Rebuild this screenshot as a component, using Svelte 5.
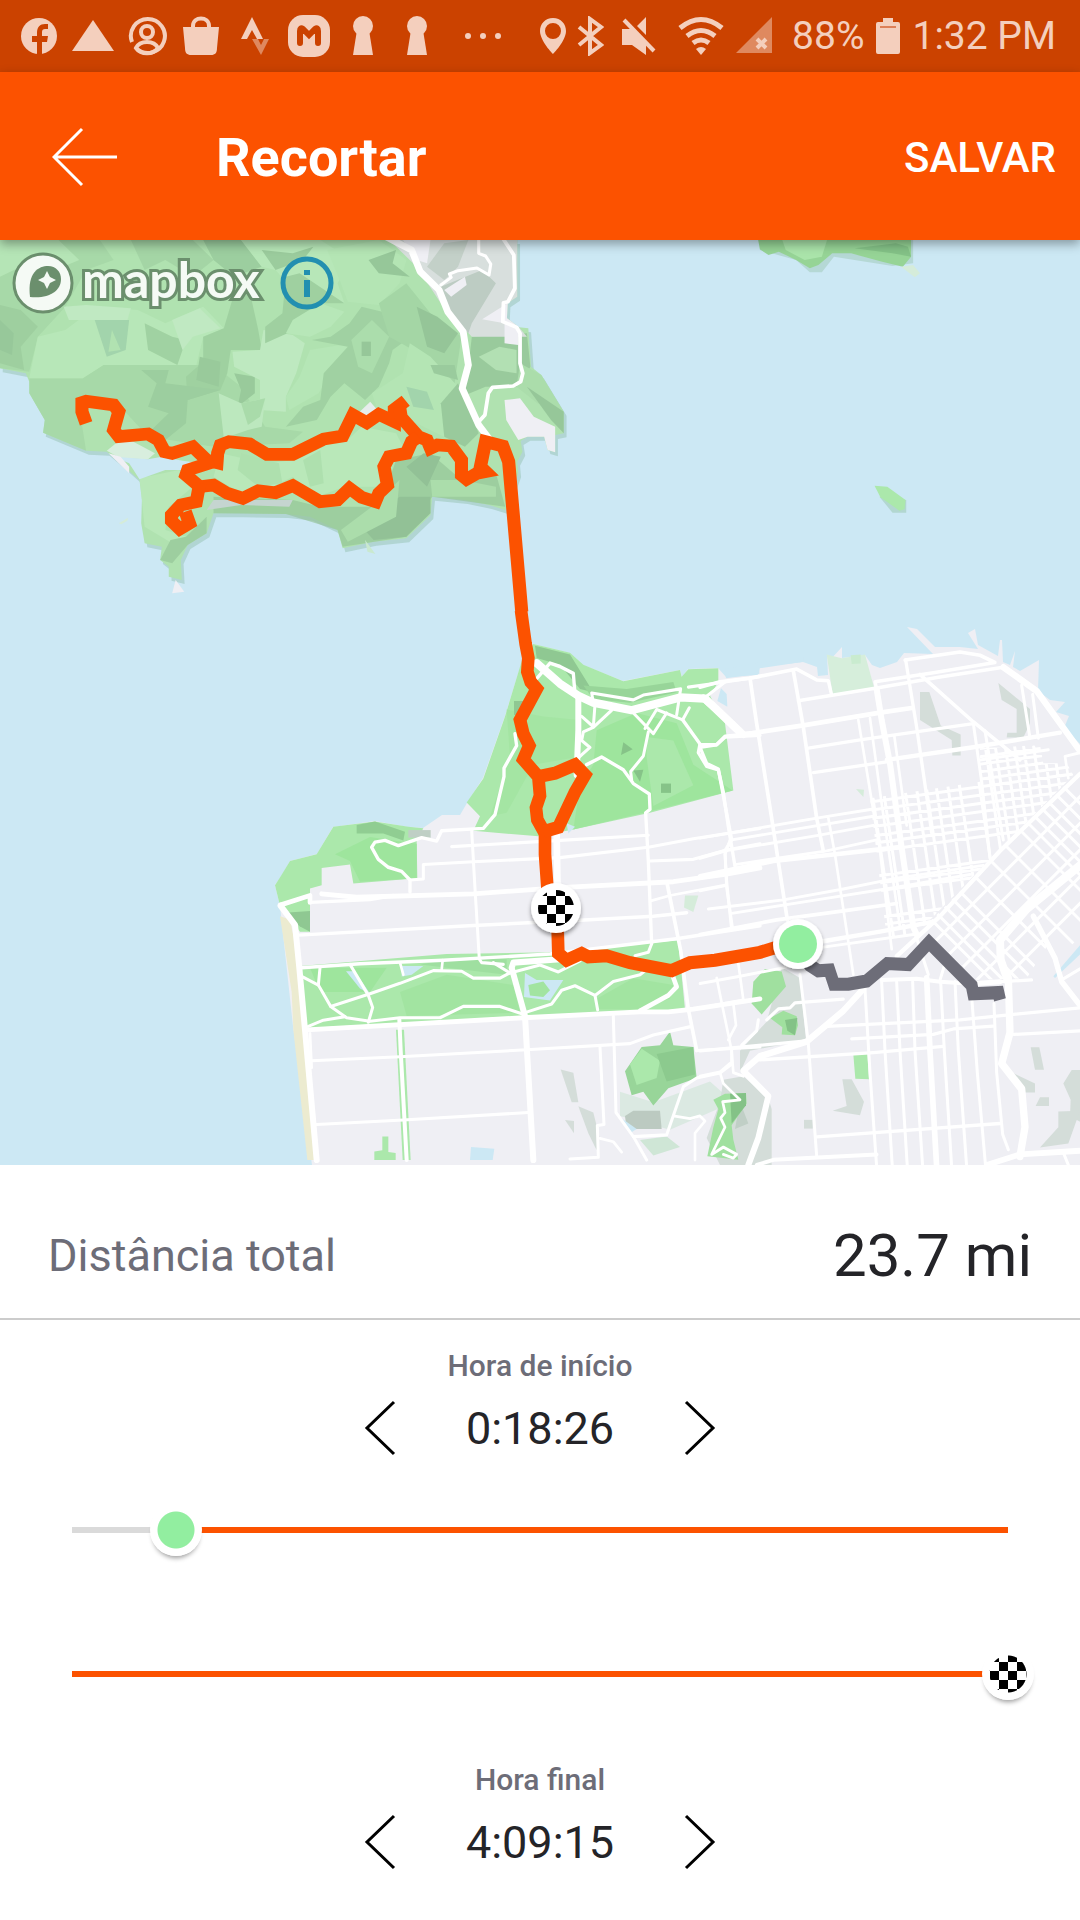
<script lang="ts">
	type Shape = { fill: string; points: string };
	type Road = { w: number; points: string };

	let start = $state(100);
	let end = $state(900);
	const steps = 900;

	// Each map sheet is digitised in its own units and placed by its matrix.
	const sheets = {
		north: 'matrix(.34439 0 0 .33333 0 0)',
		bay: 'matrix(.34439 0 0 .33333 400 0)',
		west: 'matrix(.33333 0 0 .34439 260 380)',
		east: 'matrix(.33333 0 0 .36354 700 360)',
		downtown: 'matrix(.33333 0 0 .33333 860 440)'
	};

	const headlands =
		'0,0 1502,0 1502,170 1474,190 1472,235 1507,262 1534,265 1542,380 1572,405 1637,515 1637,580 1612,585 1612,637 1590,630 1580,590 1532,590 1512,603 1517,635 1502,665 1505,700 1467,810 1420,795 1350,780 1255,770 1250,825 1180,895 1085,905 995,925 980,870 900,830 830,822 700,820 620,820 600,880 545,915 525,960 528,1020 490,1010 490,980 465,960 470,920 420,910 410,850 412,780 405,720 350,670 310,635 250,632 125,578 130,540 85,460 85,425 75,400 0,385';

	const hills: Shape[] = [
		{ fill: '#a2d4a3', points: '0,0 290,0 330,60 250,90 190,200 110,290 85,395 0,385' },
		{ fill: '#b9e8ba', points: '0,0 170,0 230,60 160,90 60,80 0,110' },
		{ fill: '#93c395', points: '0,195 60,210 110,260 60,320 70,390 0,370' },
		{ fill: '#88b88d', points: '0,240 40,280 35,345 0,330' },
		{ fill: '#95c898', points: '40,110 130,90 190,150 120,180' },
		{ fill: '#a2d4a3', points: '85,415 240,415 300,375 620,375 700,440 770,560 880,575 840,610 620,620 430,590 350,500 230,500 250,632 125,578 130,540 85,460' },
		{ fill: '#bdebbe', points: '110,290 190,270 280,200 400,210 480,250 590,200 650,265 590,290 570,375 300,375 240,415 85,415' },
		{ fill: '#cbeece', points: '185,200 250,195 380,205 370,240 280,240 200,240' },
		{ fill: '#9accaa', points: '275,240 375,240 365,330 310,350' },
		{ fill: '#b3e3b3', points: '325,270 350,330 315,335' },
		{ fill: '#97c999', points: '420,250 500,290 540,300 515,375 430,330' },
		{ fill: '#cbeece', points: '500,240 580,205 640,265 560,290 530,330' },
		{ fill: '#9dce9f', points: '380,0 560,0 620,60 560,110 480,60 420,90' },
		{ fill: '#90c194', points: '590,0 700,0 760,80 680,110 620,60' },
		{ fill: '#bdebbe', points: '700,0 930,0 1020,60 980,130 1000,190 870,170 800,90 760,80' },
		{ fill: '#8ebf92', points: '760,30 850,40 910,20 880,60 800,90' },
		{ fill: '#95c697', points: '590,290 650,265 680,160 720,130 735,200 750,270 760,330 670,330 660,400 640,450 545,480 540,410 590,365' },
		{ fill: '#8abb8e', points: '580,350 640,365 635,440 570,420' },
		{ fill: '#90c194', points: '410,390 490,390 480,430 640,450 545,480 540,550 480,600 430,580 490,520 430,500 455,430' },
		{ fill: '#8abb8e', points: '680,400 740,410 740,460 690,500 700,450' },
		{ fill: '#c8eecb', points: '765,270 850,285 885,310 860,400 830,470 830,515 755,510 755,420 680,380 675,335 755,330' },
		{ fill: '#b9e9ba', points: '900,330 1020,310 960,400 925,460 840,510 830,470 870,410' },
		{ fill: '#c5ecc8', points: '635,460 700,490 770,475 760,560 720,570 650,595' },
		{ fill: '#a6d8a7', points: '700,490 770,475 755,530 720,555' },
		{ fill: '#94c597', points: '830,110 870,100 1000,190 930,190 920,240 770,310 770,260 820,220' },
		{ fill: '#bdebbe', points: '850,240 930,190 1000,215 960,260 900,290 830,280' },
		{ fill: '#96c799', points: '905,300 960,290 1015,250 1050,200 1170,230 1180,300 1140,330 1130,370 1100,440 1060,480 1000,430 960,470 920,540 830,560 880,500 930,480 940,400 1010,320' },
		{ fill: '#a9daaa', points: '1020,300 1080,240 1130,290 1080,400 1040,380' },
		{ fill: '#86b68b', points: '1050,305 1077,305 1077,348 1050,348' },
		{ fill: '#b7e8b8', points: '950,30 1100,0 1180,60 1160,130 1100,195 1010,185 990,130' },
		{ fill: '#86b68b', points: '1070,60 1150,30 1140,70 1190,110 1100,100' },
		{ fill: '#9dcf9f', points: '1100,190 1180,130 1250,220 1340,290 1320,430 1200,330 1130,290' },
		{ fill: '#84b389', points: '1210,200 1270,230 1330,280 1290,340 1240,320' },
		{ fill: '#b7e8b8', points: '1190,310 1250,350 1330,440 1380,560 1290,590 1190,540 1100,520 1080,460 1170,400' },
		{ fill: '#8dbd91', points: '1250,375 1320,375 1330,420 1260,400' },
		{ fill: '#9accaa', points: '1180,440 1240,455 1260,510 1200,500' },
		{ fill: '#8bbb8f', points: '1330,430 1390,580 1350,620 1290,590 1280,490' },
		{ fill: '#8bbb8f', points: '1370,290 1530,280 1540,380 1510,440 1410,440 1340,470 1360,380' },
		{ fill: '#b4dfb5', points: '1390,350 1450,320 1500,330 1500,400 1440,390' },
		{ fill: '#a8daa9', points: '1510,370 1572,405 1637,515 1560,490 1500,440' },
		{ fill: '#86b68b', points: '1530,440 1637,515 1637,580 1600,540' },
		{ fill: '#bfedc0', points: '640,640 770,670 860,660 960,610 1010,600 1050,560 1150,580 1180,640 1110,680 1110,740 1040,740 1000,740 920,770 850,710 790,740 700,760 620,710' },
		{ fill: '#addfae', points: '700,640 810,670 820,730 750,740 690,690' },
		{ fill: '#addfae', points: '880,660 930,630 940,730 900,740' },
		{ fill: '#92c295', points: '620,770 850,780 930,800 1090,800 1130,720 1150,660 1250,640 1340,720 1440,700 1467,800 1255,770 1180,890 995,920 980,870 830,822 620,820' },
		{ fill: '#7fac86', points: '1050,860 1160,770 1250,770 1250,820 1180,890 1085,900' },
		{ fill: '#a9dba9', points: '1080,800 1160,720 1150,830 1010,905 990,870' },
		{ fill: '#7fac86', points: '1180,680 1230,640 1280,650 1240,740' },
		{ fill: '#a8daa9', points: '1250,720 1340,720 1440,740 1440,770 1255,770' },
		{ fill: '#bfedc0', points: '405,715 520,690 560,740 490,800 480,870 540,890 500,910 420,860 412,780' },
		{ fill: '#92c295', points: '540,890 600,830 600,880 545,915 500,970 465,960 495,900' }
	];

	const northShapes: Shape[] = [
		{ fill: '#c5d5d0', points: '620,780 850,780 840,800 700,795 600,810' },
		{ fill: '#d8eede', points: '310,632 360,590 450,640 430,658 350,655' },
		{ fill: '#cce8f4', points: '330,650 430,658 470,650 530,662 575,668 525,690 480,690 405,718 375,670' },
		{ fill: '#efeff4', points: '315,640 350,650 375,680 375,700 345,670' },
		{ fill: '#efeff4', points: '510,1020 535,1055 500,1060' },
		{ fill: '#d5ecd9', points: '345,850 372,833 370,842 352,853' },
		{ fill: '#c9e9cf', points: '1060,900 1090,942 1067,935' },
		{ fill: '#e6edec', points: '1040,520 1075,485 1100,515 1065,545' },
		{ fill: '#d8dfdd', points: '1130,0 1502,0 1502,170 1474,190 1472,235 1507,262 1530,290 1370,290 1280,190 1210,80' },
		{ fill: '#bdccc3', points: '1280,140 1400,90 1440,130 1370,250 1360,280 1300,220' },
		{ fill: '#c3d0c8', points: '1290,10 1360,0 1330,80 1290,120 1240,80' },
		{ fill: '#efeff4', points: '1170,0 1250,0 1240,70 1210,60' },
		{ fill: '#efeff4', points: '1290,150 1350,110 1355,135 1310,170' },
		{ fill: '#efeff4', points: '1400,238 1474,190 1472,235 1507,262 1505,315 1465,310 1465,250' },
		{ fill: '#efeff4', points: '1465,480 1510,475 1550,530 1612,560 1612,637 1590,630 1580,590 1532,590 1505,600 1470,540' }
	];

	const bayShapes: Shape[] = [
		{ fill: '#b5d8d5', points: '1045,30 1150,60 1190,97 1225,97 1260,50 1430,78 1490,70 1490,0 1045,0' },
		{ fill: '#96d496', points: '1040,0 1484,0 1484,50 1460,80 1400,65 1310,40 1255,40 1215,75 1190,85 1150,60 1100,35 1070,45 1045,28' },
		{ fill: '#aae4aa', points: '1110,0 1240,0 1225,50 1175,60 1120,30' },
		{ fill: '#84c287', points: '1320,25 1440,10 1475,20 1484,50 1430,40' },
		{ fill: '#d5ecda', points: '1455,80 1490,75 1510,100 1495,112' },
		{ fill: '#b2d7d0', points: '1392,770 1430,818 1470,818 1470,780' },
		{ fill: '#abe8ab', points: '1378,737 1415,740 1468,780 1465,808 1450,812 1395,772' }
	];

	const peninsula =
		'533,404 570,413 583,425 623,441 680,430 682,437 688,429 718,428 726,437 758,435 760,427 803,422 817,427 818,436 828,435 827,415 830,420 842,407 842,418 865,415 872,425 880,428 897,422 904,413 933,414 907,387 917,389 935,407 960,407 978,409 968,393 975,389 978,405 998,416 1000,400 1002,400 1003,422 1010,425 1015,411 1013,427 1020,431 1039,420 1038,451 1050,460 1065,462 1056,472 1069,476 1064,488 1080,504 1080,925 312,925 293,786 280,666 275,645 282,635 290,621 317,614 333,587 375,581 408,587 423,588 442,575 460,575 467,563 483,538 505,476 522,421';

	const westShapes: Shape[] = [
		{ fill: '#ecebd0', points: '60,860 90,870 118,1000 170,1568 142,1568 100,1190 95,1080' },
		{ fill: '#abe8ab', points: '785,120 820,70 930,95 970,130 1090,178 1260,145 1265,165 1285,143 1375,140 1375,180 1350,220 1395,300 1420,495 1170,560 940,608 835,628 640,612 660,570 620,530 670,460 735,280' },
		{ fill: '#9ee59d', points: '1010,320 1130,270 1250,300 1300,420 1418,495 1170,555 940,608 960,480 1000,420' },
		{ fill: '#a4e5a3', points: '740,260 850,280 950,290 940,400 820,420 740,560 690,570 750,400' },
		{ fill: '#abe8ab', points: '1160,340 1240,350 1300,480 1180,540 1160,400' },
		{ fill: '#8fc892', points: '825,75 930,100 1000,210 960,200 900,130 830,110' },
		{ fill: '#98d599', points: '970,190 1100,200 1240,180 1250,210 1110,240 1000,230' },
		{ fill: '#86c388', points: '1090,355 1118,375 1083,392' },
		{ fill: '#86c388', points: '1120,437 1150,435 1140,470' },
		{ fill: '#86c388', points: '1203,475 1233,475 1233,502 1203,502' },
		{ fill: '#8fc892', points: '762,235 790,235 785,280 762,275' },
		{ fill: '#cfe8f2', points: '920,590 945,600 925,620' },
		{ fill: '#abe8ab', points: '45,770 65,740 90,700 170,680 220,600 345,585 445,600 490,605 470,640 472,750 280,765 270,710 185,720 185,770 150,780 150,905 120,905 60,830' },
		{ fill: '#9ee59d', points: '225,680 330,630 400,640 470,650 470,750 300,760 270,700' },
		{ fill: '#90cd92', points: '290,595 345,585 435,615 430,640 370,620 290,620' },
		{ fill: '#bfcfc5', points: '445,610 512,610 512,632 445,632' },
		{ fill: '#8fc892', points: '75,850 150,845 150,905 120,890' },
		{ fill: '#d5ecda', points: '1275,800 1315,800 1300,848 1272,835' },
		{ fill: '#abe8ab', points: '120,1005 560,970 870,965 1255,930 1275,1130 800,1150 140,1185' },
		{ fill: '#9ee59d', points: '150,1010 380,1010 330,1080 180,1080' },
		{ fill: '#a2e4a1', points: '420,1080 560,1030 760,1060 780,1140 440,1150' },
		{ fill: '#a2e4a1', points: '1010,1100 1120,1040 1240,1060 1230,1100 1130,1130 1010,1130' },
		{ fill: '#9fdfa0', points: '480,1000 600,980 740,985 740,1030 560,1010' },
		{ fill: '#cce8f4', points: '258,1020 285,1020 330,1085 300,1070' },
		{ fill: '#cce8f4', points: '425,1005 490,1005 455,1030 425,1035' },
		{ fill: '#cce8f4', points: '795,1025 830,1045 910,1045 870,1105 792,1095' },
		{ fill: '#a2e4a1', points: '805,1060 850,1050 870,1075 850,1095 810,1090' },
		{ fill: '#cce8f4', points: '1383,198 1400,215 1402,252 1372,235' },
		{ fill: '#abe8ab', points: '408,1190 432,1190 452,1568 428,1568' },
		{ fill: '#abe8ab', points: '367,1500 385,1500 385,1545 407,1548 407,1568 343,1568 343,1543 367,1540' },
		{ fill: '#cce8f4', points: '633,1530 703,1535 698,1568 630,1568' },
		{ fill: '#d4ddd9', points: '902,1305 940,1315 955,1400 935,1400' },
		{ fill: '#d4ddd9', points: '955,1412 1000,1430 1018,1500 1010,1540 985,1490' },
		{ fill: '#d4ddd9', points: '915,1452 942,1455 942,1490' },
		{ fill: '#dbe9e2', points: '1080,1370 1180,1400 1350,1340 1420,1400 1230,1480 1080,1440' },
		{ fill: '#bccac1', points: '1120,1425 1200,1425 1205,1478 1100,1478 1095,1440' },
		{ fill: '#cce8f4', points: '1075,1440 1130,1478 1110,1490' },
		{ fill: '#98d599', points: '1095,1310 1145,1240 1200,1235 1230,1195 1240,1235 1300,1240 1310,1330 1225,1360 1180,1410 1150,1370 1115,1380' },
		{ fill: '#abe8ab', points: '1110,1290 1145,1245 1200,1280 1190,1330 1130,1350' },
		{ fill: '#8cca8e', points: '1190,1260 1300,1240 1305,1320 1220,1340' },
		{ fill: '#cfe6d6', points: '1140,1510 1220,1500 1260,1530 1180,1555' }
	];

	const eastShapes: Shape[] = [
		{ fill: '#d6eedb', points: '380,150 425,160 495,150 522,240 398,260' },
		{ fill: '#c9ebcf', points: '452,152 482,150 482,175 455,176' },
		{ fill: '#cce8f4', points: '75,190 180,172 310,158 310,170 178,188 178,203 78,215' },
		{ fill: '#d4ddd9', points: '660,253 688,253 722,345 782,370 782,428 757,428 755,385 660,330' },
		{ fill: '#d4ddd9', points: '895,228 990,300 990,340 970,378 920,378 922,365 950,365 950,300 905,275' },
		{ fill: '#d5ecda', points: '468,520 492,522 490,542' },
		{ fill: '#d4ddd9', points: '245,1010 300,1040 318,1210 150,1240 120,1300 120,1240 200,1160' },
		{ fill: '#a0e09f', points: '160,1050 195,1015 245,1022 258,1063 185,1140 155,1110' },
		{ fill: '#a0e09f', points: '210,1150 250,1130 290,1145 294,1170 285,1197 245,1195 247,1175' },
		{ fill: '#84c287', points: '255,1155 292,1150 285,1197 262,1185' },
		{ fill: '#d4ddd9', points: '70,1320 130,1310 205,1370 215,1400 215,1554 60,1554 20,1480 60,1380' },
		{ fill: '#c0cfc6', points: '120,1380 145,1440 105,1455' },
		{ fill: '#a0e09f', points: '40,1375 75,1358 138,1356 140,1385 95,1445 100,1485 115,1540 22,1530 40,1450 55,1400' },
		{ fill: '#84c287', points: '90,1358 138,1356 138,1390 95,1440' },
		{ fill: '#abe8ab', points: '460,1250 502,1248 507,1318 466,1317' },
		{ fill: '#d4ddd9', points: '427,1318 455,1318 492,1380 480,1417 398,1405 440,1392' },
		{ fill: '#d4ddd9', points: '312,1430 338,1430 338,1454 312,1454' },
		{ fill: '#d4ddd9', points: '992,1230 1018,1230 1032,1292 1005,1292' },
		{ fill: '#d4ddd9', points: '925,1295 1005,1330 1005,1355 970,1355' },
		{ fill: '#d4ddd9', points: '1020,1368 1047,1368 1047,1392 1007,1392' },
		{ fill: '#d4ddd9', points: '1090,1330 1115,1293 1140,1293 1140,1435 1110,1420 1112,1375' },
		{ fill: '#d4ddd9', points: '1075,1407 1140,1405 1105,1495 1020,1506 1075,1450' },
		{ fill: '#cce8f4', points: '1060,1035 1140,950 1140,975 1065,1040' }
	];

	const northRoads: Road[] = [
		{ w: 20, points: '1120,-10 1195,30 1220,95 1275,150 1300,215 1345,275 1360,375 1342,445 1390,555 1430,610' },
		{ w: 11, points: '1460,-5 1492,45 1495,145 1475,185 1462,188 1460,245 1500,262 1510,280 1510,370 1518,400 1512,425 1490,438 1430,442 1418,460 1408,525 1390,545' },
		{ w: 9, points: '1390,0 1390,40 1410,48 1425,72 1420,105 1385,84 1330,92 1305,102 1310,112 1280,135' }
	];

	const westRoads: Road[] = [
		{ w: 24, points: '830,125 900,185 955,220 1000,240 1115,262 1260,225 1335,228 1440,325' },
		{ w: 18, points: '955,220 955,320 950,450' },
		{ w: 20, points: '890,620 893,800' },
		{ w: 10, points: '830,170 870,125 900,135 940,155 945,215' },
		{ w: 9, points: '1000,240 995,212 1120,232 1150,218 1262,200 1250,275' },
		{ w: 9, points: '1285,195 1395,180 1500,165' },
		{ w: 9, points: '1335,225 1395,180' },
		{ w: 10, points: '1440,330 1500,325' },
		{ w: 9, points: '1005,245 1000,310 965,280' },
		{ w: 9, points: '1055,262 1000,312 970,325 965,350 990,370 955,400' },
		{ w: 9, points: '1115,265 1180,330 1220,270' },
		{ w: 9, points: '1155,315 1190,260 1268,290 1288,255' },
		{ w: 10, points: '1268,290 1320,360 1315,385 1340,425 1375,435 1390,500 1405,600 1425,715' },
		{ w: 10, points: '1320,362 1370,362 1395,340 1500,335' },
		{ w: 10, points: '980,420 1025,398 1090,435 1120,475 1168,505 1170,550 1157,560 1165,700 1175,940' },
		{ w: 9, points: '1115,465 1112,440 1150,395 1165,325' },
		{ w: 10, points: '765,330 770,365 732,430 732,455 705,565 670,605 545,612 530,642 485,632 415,655 375,640 345,645 335,660 355,695 385,718 425,730 450,755 450,790' },
		{ w: 9, points: '450,755 490,752 490,710 640,702 900,690 1165,660 1300,635 1500,605' },
		{ w: 9, points: '575,658 900,640 1165,625' },
		{ w: 9, points: '635,610 645,780 658,985 665,995 730,1000' },
		{ w: 14, points: '185,795 290,805 640,795 900,777 1240,760 1400,738 1500,720' },
		{ w: 10, points: '150,820 330,812 400,800' },
		{ w: 14, points: '60,828 150,800 150,820' },
		{ w: 18, points: '62,830 105,885 118,1010 135,1190 170,1568' },
		{ w: 10, points: '115,915 640,887 960,872 1180,860 1280,850' },
		{ w: 10, points: '125,1010 300,998 550,988 870,970 1255,925 1500,888' },
		{ w: 14, points: '140,1190 790,1155 1140,1138 1225,1138 1300,1130 1500,1100' },
		{ w: 18, points: '900,985 760,995 755,1010 795,1150 820,1568' },
		{ w: 9, points: '270,1000 325,1090 338,1125 325,1168' },
		{ w: 9, points: '180,1010 175,1060' },
		{ w: 9, points: '125,1035 175,1060 212,1122 260,1155 330,1165 420,1155 540,1155 610,1122 720,1122 790,1145' },
		{ w: 9, points: '145,1180 190,1162 255,1152' },
		{ w: 9, points: '212,1122 330,1085 420,1055 520,1018 605,1020 640,1040 720,1040 755,1022' },
		{ w: 8, points: '420,995 430,1030' },
		{ w: 8, points: '548,988 545,1015' },
		{ w: 9, points: '700,995 750,1025 840,1002 895,1022 960,990' },
		{ w: 9, points: '795,1140 875,1115 905,1075 945,1062 1005,1090 1060,1050 1140,1030 1160,1015' },
		{ w: 9, points: '1005,1090 1013,1132' },
		{ w: 14, points: '1235,1025 1250,1065 1225,1090 1140,1135' },
		{ w: 9, points: '1175,940 1165,965 1125,975' },
		{ w: 11, points: '1222,768 1262,960 1285,1130 1310,1250' },
		{ w: 9, points: '1310,1250 1500,1240' },
		{ w: 9, points: '1170,700 1300,695 1400,668 1500,650' },
		{ w: 9, points: '1410,640 1395,680 1400,760 1415,900' },
		{ w: 8, points: '1175,815 1230,800 1395,770' },
		{ w: 9, points: '155,1280 420,1268 800,1248 1110,1230 1180,1205 1295,1180' },
		{ w: 9, points: '170,1465 430,1452 805,1430' },
		{ w: 8, points: '150,1200 155,1300' },
		{ w: 12, points: '418,1160 422,1250 440,1568' },
		{ w: 9, points: '1060,1150 1068,1430 1120,1500 1160,1568' },
		{ w: 9, points: '1020,1240 1032,1465 1012,1468 1015,1560 930,1565' },
		{ w: 9, points: '1120,1500 1220,1495 1270,1355 1310,1330 1380,1315 1415,1290 1415,1250' },
		{ w: 8, points: '1020,1505 1060,1515 1085,1545' },
		{ w: 8, points: '1240,1440 1290,1448 1320,1440 1335,1455 1305,1490 1305,1568' }
	];

	const eastRoads: Road[] = [
		{ w: 13, points: '0,760 220,718 400,700 600,680' },
		{ w: 10, points: '0,240 60,225 150,215 290,190 350,220 385,222 395,262' },
		{ w: 20, points: '10,270 60,310 130,370' },
		{ w: 13, points: '130,370 310,345 540,310 635,297' },
		{ w: 10, points: '295,277 530,242 720,212 910,185' },
		{ w: 18, points: '910,185 1010,250 1140,415' },
		{ w: 10, points: '615,165 780,143 840,152 885,172 700,200 525,225 530,245' },
		{ w: 18, points: '530,245 545,330 570,450 600,650 640,900 650,920' },
		{ w: 11, points: '150,215 170,340 215,600 235,720 262,880' },
		{ w: 11, points: '280,195 310,350 350,600 370,690' },
		{ w: 9, points: '320,408 480,385 820,340' },
		{ w: 9, points: '340,475 560,445' },
		{ w: 12, points: '560,440 820,405 1080,365' },
		{ w: 10, points: '617,165 650,350 680,540 695,640' },
		{ w: 10, points: '660,205 820,335 960,440' },
		{ w: 9, points: '965,235 990,380' },
		{ w: 9, points: '998,260 1015,380' },
		{ w: 9, points: '820,340 845,500 870,710' },
		{ w: 9, points: '855,360 880,500 910,660' },
		{ w: 8, points: '475,330 540,690 575,960' },
		{ w: 8, points: '510,325 545,560 600,900' },
		{ w: 8, points: '583,375 620,620' },
		{ w: 8, points: '840,440 1045,412' },
		{ w: 8, points: '1140,420 1095,430 1105,490' },
		{ w: 8, points: '0,655 350,600 520,575' },
		{ w: 8, points: '95,660 520,595' },
		{ w: 8, points: '75,690 350,648 520,620' },
		{ w: 8, points: '105,728 380,690 530,660' },
		{ w: 8, points: '385,600 405,700 460,1030' },
		{ w: 8, points: '0,800 80,785' },
		{ w: 8, points: '25,850 250,825 430,795 590,765 850,730' },
		{ w: 8, points: '95,862 350,825 590,790 810,755' },
		{ w: 10, points: '0,920 230,880 430,855 590,835' },
		{ w: 12, points: '360,940 540,912 700,885' },
		{ w: 8, points: '370,955 640,920' },
		{ w: 10, points: '0,710 75,690 95,660 55,465 20,450 0,405 50,398 75,375 130,370' },
		{ w: 9, points: '75,690 80,790 97,900' },
		{ w: 8, points: '0,1055 120,1035 260,1010' },
		{ w: 8, points: '115,1000 130,1100 0,1122' },
		{ w: 8, points: '50,1040 70,1130 95,1240 100,1300 130,1310' },
		{ w: 8, points: '100,1110 108,1170 85,1210' },
		{ w: 8, points: '0,1310 60,1298 90,1275' },
		{ w: 9, points: '0,1240 320,1213' },
		{ w: 9, points: '430,1098 285,1108 270,1122 235,1125 200,1155' },
		{ w: 9, points: '175,1155 170,1185 125,1225' },
		{ w: 9, points: '300,1030 325,1220 350,1530' },
		{ w: 12, points: '1140,478 900,690 720,870 590,980' },
		{ w: 18, points: '490,1070 430,1130 320,1215 180,1255 130,1295 205,1365 175,1480 145,1554' },
		{ w: 8, points: '60,1300 70,1330 120,1375 68,1380 75,1410 62,1425 75,1450 35,1525 70,1505 110,1525 100,1535 70,1525' },
		{ w: 11, points: '545,1045 650,1042 720,1050 800,1055' },
		{ w: 14, points: '830,1055 900,1050' },
		{ w: 9, points: '900,1050 995,1045' },
		{ w: 9, points: '380,1173 780,1155 940,1140 1140,1122' },
		{ w: 9, points: '455,1207 700,1195 760,1180 880,1172' },
		{ w: 9, points: '180,1265 520,1245 730,1228' },
		{ w: 9, points: '350,1477 900,1440' },
		{ w: 11, points: '170,1554 220,1540 530,1525' },
		{ w: 9, points: '735,1000 720,1045' },
		{ w: 9, points: '650,930 685,1030' },
		{ w: 9, points: '495,1070 510,1300 530,1560' },
		{ w: 9, points: '545,1050 555,1240 577,1560' },
		{ w: 9, points: '590,1050 600,1240 622,1560' },
		{ w: 9, points: '638,1050 645,1240 668,1560' },
		{ w: 17, points: '680,1040 690,1240 710,1560' },
		{ w: 9, points: '722,1050 733,1240 755,1560' },
		{ w: 9, points: '765,1050 775,1240 800,1560' },
		{ w: 9, points: '815,1090 832,1300 857,1560' },
		{ w: 9, points: '882,1110 890,1300 908,1470 925,1512' },
		{ w: 24, points: '1140,730 980,850 900,935 902,990 925,1050' },
		{ w: 22, points: '925,1040 930,1190 905,1275 965,1345 975,1450 960,1530' },
		{ w: 16, points: '860,1554 960,1525 1140,1515' },
		{ w: 9, points: '1090,1520 1105,1554' },
		{ w: 16, points: '1000,870 1065,985 1085,1050 1140,1115' },
		{ w: 9, points: '1085,1045 1140,1015' },
		{ w: 9, points: '942,1195 1140,1185' }
	];

	// Downtown blocks: streets north of Market, diagonals south of it.
	const blockRows = [250, 275, 297, 320, 342, 365, 390, 415, 440, 468, 490, 515, 590, 612, 635, 715, 738];
	const blockCols = [40, 75, 140, 175, 205, 235, 270, 305, 365, 400, 430, 460, 488, 515, 545, 575, 605];
	const somaLong = [1010, 1090, 1170, 1250, 1330];
	const somaCross = [505, 470, 425, 380, 335, 245, 150, 60, -30, -75, -115, -160, -200, -245, -290];

	const blocks = [
		...blockRows.map((y) => `M0 ${y + 5}L690 ${y - 90}`),
		...blockCols.map((x) => `M${x - 24} 200L${x + 62} 780`)
	].join('');
	const soma = [
		...somaLong.map((s) => `M0 ${s}L${s} 0`),
		...somaCross.map((c) => `M0 ${c}L900 ${c + 900}`)
	].join('');

	const northRoute = [
		'250,550 238,515 238,488 250,484 330,495 345,515 330,570 345,590 430,582 460,600 478,635 500,640 560,620 600,660 630,668 632,640 640,615 665,605 725,612 775,643 850,643 940,597 995,588 1025,525 1065,548 1100,523 1145,545 1145,508 1178,482',
		'1160,500 1165,532 1215,590 1240,600 1250,625 1270,615 1310,618 1340,660 1340,705 1355,718 1385,700 1410,695 1395,680 1410,605 1460,618 1477,665 1515,1115',
		'1215,590 1195,605 1180,640 1130,650 1115,680 1125,735 1100,760 1090,785 1050,772 1015,745 980,780 930,785 850,737 800,758 750,752 705,775 660,760 620,735 580,740 540,705 545,690 620,665',
		'580,730 570,785 525,795 498,825 498,843 522,867 550,850 538,815'
	];
	const westRoute = [
		'783,-28 797,70 805,110 802,150 812,180 830,200 780,290 790,330 808,365 790,405 835,455 840,510 828,545 832,580 855,620 855,680 862,775 888,838 893,900 895,968 920,988 965,968 985,978 1040,975 1110,995 1235,1018 1290,995 1365,988 1500,965 1600,935',
		'835,455 885,445 945,420 975,450 945,500 895,602 850,615'
	];
	const croppedRoute = '293,945 330,1005 355,1020 388,1018 402,1057 445,1057 500,1048 562,1000 625,1003 687,942 815,1060 820,1083 895,1080 900,1100';

	const checks = [
		[0, -3], [-9, 6], [-18, -3], [-9, -12], [9, -12], [9, 6], [0, -21], [0, 15], [-18, -21], [-18, 15]
	];
</script>

{#snippet shapes(list: Shape[])}
	{#each list as shape}
		<polygon points={shape.points} fill={shape.fill} />
	{/each}
{/snippet}

{#snippet roads(list: Road[])}
	{#each list as road}
		<polyline points={road.points} stroke-width={road.w} />
	{/each}
{/snippet}

{#snippet chevron(d: string)}
	<svg width="32" height="56" viewBox="0 0 32 56" fill="none" stroke="currentColor" stroke-width="3" aria-hidden="true">
		<path {d} />
	</svg>
{/snippet}

{#snippet keyhole()}
	<svg class="icon" viewBox="0 0 44 44">
		<circle cx="22" cy="12" r="10" />
		<path d="M16 16h12l4 25H12z" />
	</svg>
{/snippet}

<div class="screen">
	<div class="status">
		<div class="notices">
			<svg class="icon" viewBox="0 0 44 44">
				<circle cx="22" cy="22" r="18" />
				<path class="cut" d="M20 40V28h-5v-6h5v-3c0-6 3-9 8-9h3v5h-3c-2 0-3 1-3 3v4h6l-1 6h-5v12z" />
			</svg>
			<svg class="icon" viewBox="0 0 44 44"><path d="M22 6l21 31H1z" /></svg>
			<svg class="icon line" viewBox="0 0 44 44">
				<path d="M7 28a17 17 0 1 1 5 7" />
				<circle cx="22" cy="18" r="6" />
				<path d="M11 34c4-8 18-8 22 0-5 7-17 7-22 0z" />
			</svg>
			<svg class="icon" viewBox="0 0 44 44">
				<path d="M4 13h36l-2 21c0 5-2 7-6 7H12c-4 0-6-2-6-7z" />
				<path d="M14 15v-3c0-10 16-10 16 0v3" fill="none" stroke="currentColor" stroke-width="4" />
			</svg>
			<svg class="icon" viewBox="0 0 44 44">
				<path d="M19 3l11 22h-6l-5-9-5 9H8z" />
				<path d="M19 25h6l3 6 3-6h5l-8 16z" opacity=".5" />
			</svg>
			<svg class="icon" viewBox="0 0 44 44">
				<rect x="1" y="1" width="42" height="42" rx="15" />
				<path d="M13 29V17q0-4 3-2l6 6 6-6q3-2 3 2v12" fill="none" stroke="#cb4200" stroke-width="6" stroke-linecap="round" />
			</svg>
			{@render keyhole()}
			{@render keyhole()}
			<svg class="dots" viewBox="0 0 36 8">
				<circle cx="3" cy="4" r="3" /><circle cx="18" cy="4" r="3" /><circle cx="33" cy="4" r="3" />
			</svg>
		</div>
		<div class="system">
			<svg width="30" height="40" viewBox="0 0 30 40">
				<path fill-rule="evenodd" d="M15 2C7 2 2 8 2 15c0 10 13 23 13 23s13-13 13-23C28 8 23 2 15 2zm0 5a8 8 0 1 1 0 16 8 8 0 0 1 0-16z" />
			</svg>
			<svg class="line" width="28" height="40" viewBox="0 0 28 40"><path d="M3 11l22 18-11 8V3l11 8L3 29" /></svg>
			<svg width="54" height="40" viewBox="0 0 54 40">
				<path d="M10 13h10l14 14v12L20 29H10zM25 10l9-9v18z" />
				<path d="M12 4l30 31" fill="none" stroke="currentColor" stroke-width="4" />
			</svg>
			<svg width="54" height="40" viewBox="0 0 54 40">
				<path d="M6 12q21-17 42 0M13 20q14-11 28 0M19 27q8-6 16 0" fill="none" stroke="currentColor" stroke-width="5" />
				<path d="M22 33q5-4 10 0l-5 6z" />
			</svg>
			<svg width="36" height="40" viewBox="0 0 36 40">
				<path d="M36 1v36H0z" opacity=".5" />
				<path d="M21 23l9 9M30 23l-9 9" fill="none" stroke="currentColor" stroke-width="4" />
			</svg>
			<span class="percent">88%</span>
			<svg width="24" height="38" viewBox="0 0 24 38">
				<path d="M7 1h10v4h5q2 0 2 2v28q0 2-2 2H2q-2 0-2-2V7q0-2 2-2h5z" />
				<path d="M4 10h16" stroke="#dd8058" stroke-width="2" />
			</svg>
			<span class="clock">1:32 PM</span>
		</div>
	</div>

	<header class="appbar">
		<button class="back" aria-label="Voltar">
			<svg width="66" height="60" viewBox="0 0 66 60" fill="none" stroke="currentColor" stroke-width="3">
				<path d="M65 30H3M30 2L2 30l28 28" />
			</svg>
		</button>
		<h1>Recortar</h1>
		<button class="save">SALVAR</button>
	</header>

	<div class="map">
		<svg class="canvas" viewBox="0 0 1080 925" role="img" aria-label="Mapa do percurso">
			<defs>
				<clipPath id="downtown">
					<polygon points="30,355 360,305 360,205 540,195 550,250 620,250 640,285 160,770 80,770" />
				</clipPath>
				<clipPath id="soma">
					<polygon points="690,240 690,740 600,830 560,800 500,895 350,900 190,745" />
				</clipPath>
				<clipPath id="flag"><circle r="18" /></clipPath>
				<filter id="lift" x="-50%" y="-50%" width="200%" height="200%">
					<feDropShadow dx="0" dy="3" stdDeviation="2" flood-opacity=".4" />
				</filter>
			</defs>

			<rect width="1080" height="925" fill="#cce8f4" />
			<g transform={sheets.north}>
				<polygon points={headlands} fill="#9fc8bd" opacity=".6" transform="translate(8 12)" />
				<polygon points={headlands} fill="#b0e2b0" />
				<g opacity=".6">{@render shapes(hills)}</g>
				{@render shapes(northShapes)}
			</g>
			<g transform={sheets.bay}>{@render shapes(bayShapes)}</g>
			<polygon points={peninsula} fill="#efeff4" />
			<g transform={sheets.west}>{@render shapes(westShapes)}</g>
			<g transform={sheets.east}>{@render shapes(eastShapes)}</g>

			<g fill="none" stroke="#fff" stroke-linecap="round" stroke-linejoin="round">
				<g transform={sheets.north}>{@render roads(northRoads)}</g>
				<g transform={sheets.west}>{@render roads(westRoads)}</g>
				<g transform={sheets.east}>{@render roads(eastRoads)}</g>
				<g transform={sheets.downtown} stroke-width="9">
					<path clip-path="url(#downtown)" d={blocks} />
					<path clip-path="url(#soma)" d={soma} />
				</g>
			</g>

			<g fill="none" stroke="#fc5200" stroke-width="38">
				<polyline transform={sheets.east} points={croppedRoute} stroke="#6d6d78" stroke-width="36" />
				<g transform={sheets.north}>
					{#each northRoute as points}<polyline {points} />{/each}
				</g>
				<g transform={sheets.west}>
					{#each westRoute as points}<polyline {points} />{/each}
				</g>
			</g>

			<g transform="translate(556 668)">
				<circle r="25" fill="#fff" filter="url(#lift)" />
				<g clip-path="url(#flag)">
					{#each checks as [x, y]}<rect {x} {y} width="9" height="9" />{/each}
				</g>
			</g>
			<g transform="translate(798 704)">
				<circle r="25" fill="#fff" filter="url(#lift)" />
				<circle r="19" fill="#92eea0" />
			</g>
		</svg>

		<div class="credit">
			<svg width="62" height="62" viewBox="0 0 62 62">
				<circle cx="31" cy="31" r="29" fill="#f5faf5" stroke="#6b8f6d" stroke-width="3" />
				<path d="M18 45C15 20 27 14 36 14c8 0 13 6 13 13 0 12-12 20-31 18z" fill="#6b8f6d" />
				<path d="M35 19l3 6 6 3-6 3-3 6-3-6-6-3 6-3z" fill="#f5faf5" />
			</svg>
			<span class="wordmark">mapbox</span>
			<button class="info" aria-label="Sobre o mapa">
				<svg width="54" height="54" viewBox="0 0 54 54">
					<circle cx="27" cy="27" r="24" fill="none" stroke="#228fb0" stroke-width="5" />
					<path d="M24 14h6v5h-6zM24 24h6v17h-6z" fill="#228fb0" />
				</svg>
			</button>
		</div>
	</div>

	<div class="distance">
		<span class="caption">Distância total</span>
		<span class="value">23.7 mi</span>
	</div>

	<div class="trim">
		<label for="start-time">Hora de início</label>
		<div class="stepper">
			<button aria-label="Diminuir hora de início">{@render chevron('M30 2L3 28l27 26')}</button>
			<output for="start-time">0:18:26</output>
			<button aria-label="Aumentar hora de início">{@render chevron('M2 2l27 26L2 54')}</button>
		</div>

		<input
			id="start-time"
			class="start"
			type="range"
			min="0"
			max={steps}
			bind:value={start}
			style:--at="{(start / steps) * 100}%"
		/>
		<input
			id="end-time"
			class="end"
			type="range"
			min="0"
			max={steps}
			bind:value={end}
			style:--at="{(end / steps) * 100}%"
		/>

		<label for="end-time">Hora final</label>
		<div class="stepper">
			<button aria-label="Diminuir hora final">{@render chevron('M30 2L3 28l27 26')}</button>
			<output for="end-time">4:09:15</output>
			<button aria-label="Aumentar hora final">{@render chevron('M2 2l27 26L2 54')}</button>
		</div>
	</div>
</div>

<style>
	:global(body) {
		margin: 0;
		background: #fff;
	}

	.screen {
		min-height: 100vh;
		font-family: Roboto, sans-serif;
		color: #242428;
		background: #fff;
	}

	button {
		display: flex;
		padding: 0;
		border: 0;
		background: none;
		color: inherit;
		font: inherit;
		cursor: pointer;
	}

	.status {
		display: flex;
		align-items: center;
		justify-content: space-between;
		height: 72px;
		padding: 0 24px 0 17px;
		background: #cb4200;
		color: #f4cfbd;
		font-size: 39px;
	}

	.status svg {
		fill: currentColor;
		flex: none;
	}

	.status .line {
		fill: none;
		stroke: currentColor;
		stroke-width: 4px;
	}

	.status .cut {
		fill: #cb4200;
	}

	.notices {
		display: flex;
		align-items: center;
		gap: 10px;
	}

	.icon {
		width: 44px;
		height: 44px;
	}

	.dots {
		width: 36px;
		height: 8px;
		margin-left: 16px;
	}

	.system {
		display: flex;
		align-items: center;
		gap: 8px;
	}

	.percent {
		margin: 0 4px 0 12px;
	}

	.clock {
		margin-left: 4px;
		white-space: nowrap;
	}

	.appbar {
		position: relative;
		z-index: 1;
		display: flex;
		align-items: center;
		height: 168px;
		padding: 2px 24px 0 52px;
		box-sizing: border-box;
		background: #fc5200;
		color: #fff;
		box-shadow: 0 4px 10px rgba(0, 0, 0, 0.35);
	}

	h1 {
		flex: 1;
		margin: 0 0 0 98px;
		font-size: 54px;
		font-weight: 700;
	}

	.save {
		font-size: 42px;
		font-weight: 500;
	}

	.map {
		position: relative;
	}

	.canvas {
		display: block;
		width: 100%;
	}

	.credit {
		position: absolute;
		top: 12px;
		left: 12px;
		display: flex;
		align-items: center;
	}

	.wordmark {
		margin: 0 20px 8px 8px;
		color: #f5faf5;
		font-family: Lato, sans-serif;
		font-size: 50px;
		font-weight: 700;
		line-height: 54px;
		-webkit-text-stroke: 6px #6b8f6d;
		paint-order: stroke fill;
	}

	.distance {
		display: flex;
		align-items: center;
		justify-content: space-between;
		height: 125px;
		padding: 28px 48px 0;
		border-bottom: 2px solid #ccc;
	}

	.caption {
		color: #6d6d78;
		font-size: 45px;
	}

	.value {
		font-size: 60px;
	}

	.trim {
		display: flex;
		flex-direction: column;
		padding: 28px 46px 40px;
	}

	label {
		align-self: center;
		color: #6d6d78;
		font-size: 30px;
		font-weight: 500;
		line-height: 36px;
	}

	.stepper {
		display: flex;
		align-items: center;
		justify-content: center;
		gap: 70px;
		height: 64px;
		margin-top: 12px;
		font-size: 45px;
	}

	.stepper button {
		color: #000;
	}

	input {
		appearance: none;
		width: 100%;
		height: 56px;
		margin: 42px 0 0;
		background: linear-gradient(to right, var(--before) var(--at), var(--after) var(--at)) center /
			calc(100% - 52px) 6px no-repeat;
	}

	.start {
		--before: #dadada;
		--after: #fc5200;
	}

	.end {
		--before: #fc5200;
		--after: #dadada;
		margin: 88px 0 60px;
	}

	input::-webkit-slider-thumb {
		appearance: none;
		width: 52px;
		height: 52px;
		border-radius: 50%;
		box-shadow: 0 5px 5px -3px rgba(0, 0, 0, 0.4);
	}

	.start::-webkit-slider-thumb {
		background: radial-gradient(circle, #92eea0 18px, #fff 19px);
	}

	.end::-webkit-slider-thumb {
		background:
			radial-gradient(circle, transparent 18px, #fff 19px),
			repeating-conic-gradient(#000 0 25%, #fff 0 50%) -1px 5px / 18px 18px;
	}
</style>
